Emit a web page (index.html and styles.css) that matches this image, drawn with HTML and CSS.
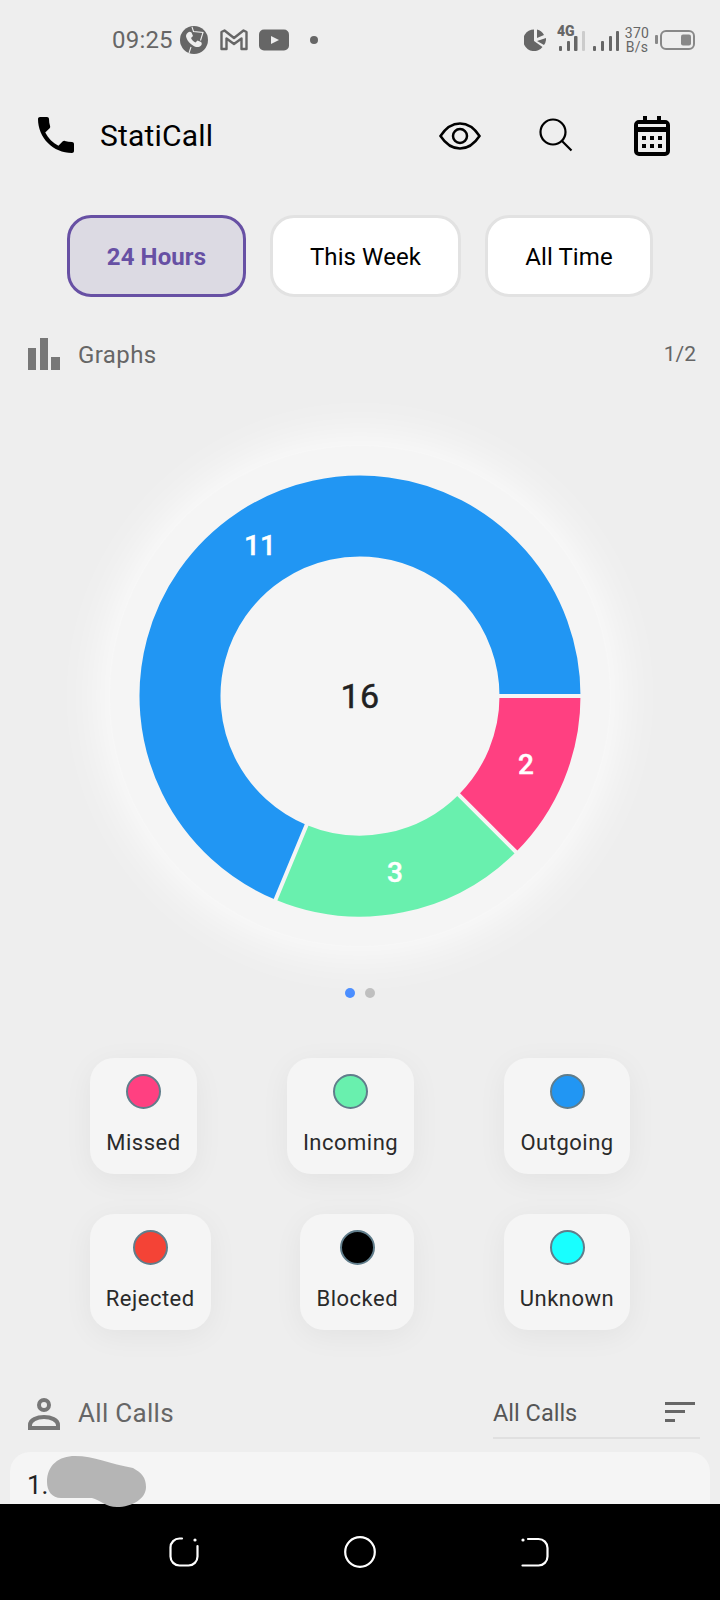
FILE: index.html
```html
<!DOCTYPE html>
<html>

<head>
    <title>StatiCall</title>
    <meta content="width=device-width, initial-scale=1" name="viewport" />
    <meta http-equiv="Content-Type" content="text/html; charset=utf-8" />
    <link rel="stylesheet" href="styles.css">
</head>

<body>
    <div id="screen">
        <div id="status">
            <span id="clock">09:25</span>
            <svg class="st-chat" width="28" height="28" viewBox="0 0 28 28">
                <circle cx="14" cy="14" r="14" fill="#666" />
                <path d="M8 6.500c1-1 2.500-1 3.500 0l1.500 3.500-2 2c1 2 2.500 3.500 4.500 4.500l2-2 3.500 1.500c1 1 1 2.500 0 3.500-2 2-5 2-8 0-3-2-5.500-4.500-6.500-7.500-1-2-.5-4 1.500-5.500z" fill="#eee" />
                <path d="M12 1l1.500 4.500 9.500 1-2.500 8M9 27l2-6" stroke="#eee" stroke-width="1.100" fill="none" />
            </svg>
            <svg class="st-mail" width="28" height="22" viewBox="0 0 28 22">
                <path d="M1.500 20V3l3-1.500L14 9l9.500-7.500 3 1.500V20h-5V9.500L14 15 6.500 9.500V20z" fill="none" stroke="#666" stroke-width="2.400" stroke-linejoin="round" />
            </svg>
            <svg class="st-yt" width="30" height="22" viewBox="0 0 30 22">
                <rect width="30" height="21" y="0.500" rx="5" fill="#666" />
                <path d="M12 7l8 4-8 4z" fill="#eee" />
            </svg>
            <span id="st-dot"></span>
            <span class="spacer"></span>
            <svg class="st-pie" width="22" height="22" viewBox="0 0 22 22">
                <path d="M10 0.500V12l8.500 6A10.800 10.800 0 1 1 10 0.500z" fill="#666" />
                <path d="M13 0.500A10 10 0 0 1 20 6l-7 3zM13 12l9-3a10 10 0 0 1-2 7z" fill="#666" />
            </svg>
            <div class="signal">
                <span class="net">4G</span>
                <svg width="27" height="21" viewBox="0 0 27 21">
                    <rect x="0" y="16" width="3" height="5" rx="1" fill="#666" />
                    <rect x="8" y="11" width="3" height="10" rx="1" fill="#666" />
                    <rect x="15" y="6" width="3.500" height="15" rx="1" fill="#666" />
                    <rect x="23" y="1" width="3" height="20" rx="1" fill="#ccc" />
                </svg>
            </div>
            <svg class="st-bars" width="27" height="21" viewBox="0 0 27 21">
                <rect x="0" y="16" width="3" height="5" rx="1" fill="#666" />
                <rect x="8" y="11" width="3" height="10" rx="1" fill="#666" />
                <rect x="16" y="6" width="3" height="15" rx="1" fill="#666" />
                <rect x="23" y="1" width="3" height="20" rx="1" fill="#666" />
            </svg>
            <div id="speed"><span>370</span><span>B/s</span></div>
            <svg class="st-batt" width="40" height="20" viewBox="0 0 40 20">
                <rect x="0" y="5" width="3" height="9" rx="1" fill="#888" />
                <rect x="6" y="1" width="33" height="18" rx="5" fill="none" stroke="#888" stroke-width="2" />
                <rect x="26" y="4.500" width="10" height="11" rx="2" fill="#888" />
            </svg>
        </div>

        <div id="appbar">
            <svg class="a-call" width="48" height="48" viewBox="0 0 24 24">
                <path d="M6.620 10.790c1.440 2.830 3.760 5.140 6.590 6.590l2.200-2.200c.27-.27.67-.36 1.020-.24 1.120.37 2.330.57 3.570.57.55 0 1 .45 1 1V20c0 .55-.45 1-1 1-9.390 0-17-7.610-17-17 0-.55.45-1 1-1h3.500c.55 0 1 .45 1 1 0 1.250.2 2.450.57 3.570.11.35.03.74-.25 1.020l-2.200 2.200z" />
            </svg>
            <h1>StatiCall</h1>
            <svg class="a-eye" width="42" height="28" viewBox="0 0 42 28">
                <path d="M1.500 14C7 5.500 14 1.500 21 1.500S35 5.500 40.500 14C35 22.500 28 26.500 21 26.500S7 22.500 1.500 14z" fill="none" stroke="#000" stroke-width="2.500" />
                <circle cx="21" cy="14" r="7" fill="none" stroke="#000" stroke-width="2.500" />
            </svg>
            <svg class="a-search" width="34" height="34" viewBox="0 0 34 34">
                <circle cx="14" cy="14" r="12.500" fill="none" stroke="#000" stroke-width="2.200" />
                <path d="M23 23l9.500 9.500" stroke="#000" stroke-width="2.200" />
            </svg>
            <svg class="a-cal" width="36" height="40" viewBox="0 0 36 40">
                <path d="M5 4h4V0h4v4h10V0h4v4h4a5 5 0 0 1 5 5v26a5 5 0 0 1-5 5H5a5 5 0 0 1-5-5V9a5 5 0 0 1 5-5zM4 16v19a1 1 0 0 0 1 1h26a1 1 0 0 0 1-1V16zM4 8v3h28V8z" fill-rule="evenodd" />
                <path d="M8 20h4v4H8zM16 20h4v4h-4zM24 20h4v4h-4zM8 28h4v4H8zM16 28h4v4h-4zM24 28h4v4h-4z" />
            </svg>
        </div>

        <div id="ranges">
            <div class="range active">24 Hours</div>
            <div class="range r-week">This Week</div>
            <div class="range r-all">All Time</div>
        </div>

        <div class="section" id="graphs-head">
            <svg width="32" height="32" viewBox="0 0 32 32">
                <path d="M0 10h8v22H0zM12 0h8v32h-8zM23 19h9v13h-9z" fill="#777" />
            </svg>
            <span class="section-title">Graphs</span>
            <span id="pager">1/2</span>
        </div>

        <div id="chart">
            <div id="disc"></div>
            <svg id="donut" width="442" height="442" viewBox="-221 -221 442 442">
                <g fill="none" stroke-width="81">
                    <path d="M180 0A180 180 0 0 1 127.300 127.300" stroke="#ff4081" />
                    <path d="M127.300 127.300A180 180 0 0 1 -68.900 166.300" stroke="#69f0ae" />
                    <path d="M-68.900 166.300A180 180 0 1 1 180 0" stroke="#2196f3" />
                </g>
                <g stroke="#f5f5f5" stroke-width="4">
                    <path d="M138 0H222M97.600 97.600L157 157M-52.800 127.500L-85 205.100" />
                </g>
                <text x="-100" y="-141" class="val">11</text>
                <text x="166" y="78" class="val">2</text>
                <text x="35" y="186" class="val">3</text>
                <text x="0" y="12" class="total">16</text>
            </svg>
        </div>

        <div id="dots"><span class="dot on"></span><span class="dot"></span></div>

        <div class="legend legend-one">
            <div class="chip"><span class="swatch missed"></span><span>Missed</span></div>
            <div class="chip"><span class="swatch incoming"></span><span>Incoming</span></div>
            <div class="chip"><span class="swatch outgoing"></span><span>Outgoing</span></div>
        </div>
        <div class="legend">
            <div class="chip"><span class="swatch rejected"></span><span>Rejected</span></div>
            <div class="chip"><span class="swatch blocked"></span><span>Blocked</span></div>
            <div class="chip"><span class="swatch unknown"></span><span>Unknown</span></div>
        </div>

        <div class="section" id="calls-head">
            <svg width="32" height="32" viewBox="0 0 32 32">
                <circle cx="16" cy="7" r="5" fill="none" stroke="#777" stroke-width="4" />
                <path d="M2 30v-3c0-5 7-8 14-8s14 3 14 8v3z" fill="none" stroke="#777" stroke-width="4" />
            </svg>
            <span class="section-title">All Calls</span>
            <div id="filter">
                <span>All Calls</span>
                <svg width="30" height="22" viewBox="0 0 30 22">
                    <path d="M0 0h30v3H0zM0 8h20v3H0zM0 17h10v3H0z" fill="#666" />
                </svg>
            </div>
        </div>

        <div id="list">
            <div class="call">1.</div>
        </div>

        <div id="nav">
            <svg width="30" height="30" viewBox="0 0 30 30">
                <path d="M13 1.500H10.500A9 9 0 0 0 1.500 10.500V19.500A9 9 0 0 0 10.500 28.500H19.500A9 9 0 0 0 28.500 19.500V9" fill="none" stroke="#fff" stroke-width="2.200" stroke-linecap="round" />
                <circle cx="26" cy="3" r="1.600" fill="#fff" />
            </svg>
            <svg width="32" height="32" viewBox="0 0 32 32">
                <circle cx="16" cy="16" r="14.800" fill="none" stroke="#fff" stroke-width="2.200" />
            </svg>
            <svg width="28" height="30" viewBox="0 0 28 30">
                <path d="M7 2H17.500A9 9 0 0 1 26.500 11V19.500A9 9 0 0 1 17.500 28.500H1.500" fill="none" stroke="#fff" stroke-width="2.200" stroke-linecap="round" />
                <circle cx="2" cy="3" r="1.600" fill="#fff" />
            </svg>
        </div>

        <svg id="blob" width="100" height="52" viewBox="0 0 100 52">
            <path d="M1 26C1 9 13 0 29 0C48 0 64 8 87 12C96 17 100 22 100 31C100 43 86 51 71 51C60 51 54 44 46 42L15 42C6 42 1 35 1 26z" fill="#b5b5b5" />
        </svg>
    </div>
</body>

</html>
```

FILE: styles.css
```css
* {
    margin: 0;
    padding: 0;
    box-sizing: border-box;
}

html,
body {
    font-family: Roboto, sans-serif;
    background: #eeeeee;
    width: 720px;
    height: 1600px;
    overflow: hidden;
}

#screen {
    position: relative;
    width: 720px;
    height: 1600px;
    overflow: hidden;
}

/* status bar */

#status {
    display: flex;
    align-items: center;
    height: 80px;
    padding: 0 25px 0 112px;
    color: #666;
}

#clock {
    font-size: 24px;
    letter-spacing: 0.2px;
    width: 68px;
}

.st-mail { margin-left: 12px; }
.st-yt { margin-left: 11px; }

#st-dot {
    width: 8px;
    height: 8px;
    border-radius: 50%;
    background: #666;
    margin-left: 21px;
}

.spacer { flex: 1; }

.signal {
    position: relative;
    margin-left: 13px;
    height: 21px;
}

.signal svg,
.st-bars { display: block; }

.net {
    position: absolute;
    left: -2px;
    top: -6px;
    font-size: 14px;
    font-weight: 900;
    line-height: 14px;
}

.st-bars {
    margin-left: 7px;
}

#speed {
    display: flex;
    flex-direction: column;
    align-items: center;
    width: 28px;
    margin-left: 3px;
    font-size: 14px;
    line-height: 14px;
    letter-spacing: 0.3px;
}

.st-batt { margin-left: 4px; }

/* app bar */

#appbar {
    display: flex;
    align-items: center;
    height: 110px;
    padding-left: 32px;
    color: #000;
}

#appbar h1 {
    font-size: 30px;
    font-weight: 400;
    letter-spacing: 0.2px;
    margin-left: 20px;
    width: 339px;
}

.a-eye { margin-top: 2px; }
.a-search { margin-left: 58px; }
.a-cal { margin: 2px 0 0 61px; }

/* range buttons */

#ranges {
    display: flex;
    padding: 25px 0 0 67px;
}

.range {
    display: flex;
    align-items: center;
    justify-content: center;
    height: 82px;
    padding-top: 1px;
    border: 3px solid #e2e2e2;
    border-radius: 24px;
    background: #fff;
    font-size: 24px;
    letter-spacing: 0.1px;
    color: #000;
    width: 191px;
    margin-left: 24px;
}

.range.active {
    width: 179px;
    margin-left: 0;
    background: #dcdae3;
    border-color: #6750a4;
    color: #6750a4;
    font-weight: 700;
}

.r-all { width: 168px; }

/* section headers */

.section {
    display: flex;
    align-items: center;
    padding: 0 24px 0 28px;
}

#graphs-head {
    margin-top: 41px;
    height: 32px;
}

.section-title {
    font-size: 24px;
    color: #666;
    margin-left: 18px;
    letter-spacing: 0.4px;
    padding-top: 1px;
}

#pager {
    margin-left: auto;
    font-size: 21px;
    color: #666;
}

/* donut */

#chart {
    position: relative;
    height: 500px;
    margin-top: 76px;
}

#disc {
    width: 500px;
    height: 500px;
    margin: 0 auto;
    border-radius: 50%;
    background: #f5f5f5;
    box-shadow: 0 0 50px 8px rgba(255, 255, 255, 0.85);
}

#donut {
    position: absolute;
    left: 139px;
    top: 29px;
}

#donut text {
    font-family: Roboto, sans-serif;
    text-anchor: middle;
}

#donut .val {
    font-size: 28px;
    font-weight: 500;
    fill: #fff;
    stroke: #fff;
    stroke-width: 0.4px;
}

#donut .total {
    font-size: 34px;
    font-weight: 400;
    letter-spacing: 0.5px;
    fill: #212121;
    stroke: #212121;
    stroke-width: 0.5px;
}

#dots {
    display: flex;
    justify-content: center;
    gap: 10px;
    margin-top: 42px;
}

.dot {
    width: 10px;
    height: 10px;
    border-radius: 50%;
    background: #bdbdbd;
}

.dot.on { background: #448aff; }

/* legend */

.legend {
    display: flex;
    justify-content: space-evenly;
    margin-top: 40px;
}

.legend-one { margin-top: 60px; }

.chip {
    display: flex;
    flex-direction: column;
    align-items: center;
    gap: 21px;
    height: 116px;
    padding: 16px 16px 0;
    border-radius: 24px;
    background: #f5f5f5;
    box-shadow: 0 6px 30px rgba(0, 0, 0, 0.05);
    font-size: 22px;
    letter-spacing: 0.5px;
    color: #2a2a2a;
}

.swatch {
    width: 35px;
    height: 35px;
    flex: none;
    border-radius: 50%;
    border: 2px solid #607d8b;
}

.missed { background: #ff4081; }
.incoming { background: #69f0ae; }
.outgoing { background: #2196f3; }
.rejected { background: #f44336; }
.blocked { background: #000; }
.unknown { background: #18ffff; }

/* call list */

#calls-head {
    margin-top: 68px;
    height: 32px;
}

#calls-head .section-title {
    font-size: 26px;
    letter-spacing: 0.3px;
    padding-bottom: 2px;
    padding-top: 0;
}

#filter {
    display: flex;
    align-items: center;
    justify-content: space-between;
    width: 207px;
    height: 50px;
    margin: 0 -4px 0 auto;
    padding: 0 5px 0 0;
    border-bottom: 2px solid #e0e0e0;
    font-size: 23.500px;
    color: #555;
}

#list {
    margin: 22px 10px 0;
}

.call {
    height: 100px;
    padding: 18px 17px;
    border-radius: 20px 20px 0 0;
    background: #f5f5f5;
    font-size: 26px;
    color: #222;
}

#nav {
    position: absolute;
    left: 0;
    right: 0;
    bottom: 0;
    height: 96px;
    display: flex;
    align-items: center;
    background: #000;
    padding: 0 0 0 169px;
    gap: 145px;
}

#blob {
    position: absolute;
    left: 46px;
    top: 1456px;
}
```
